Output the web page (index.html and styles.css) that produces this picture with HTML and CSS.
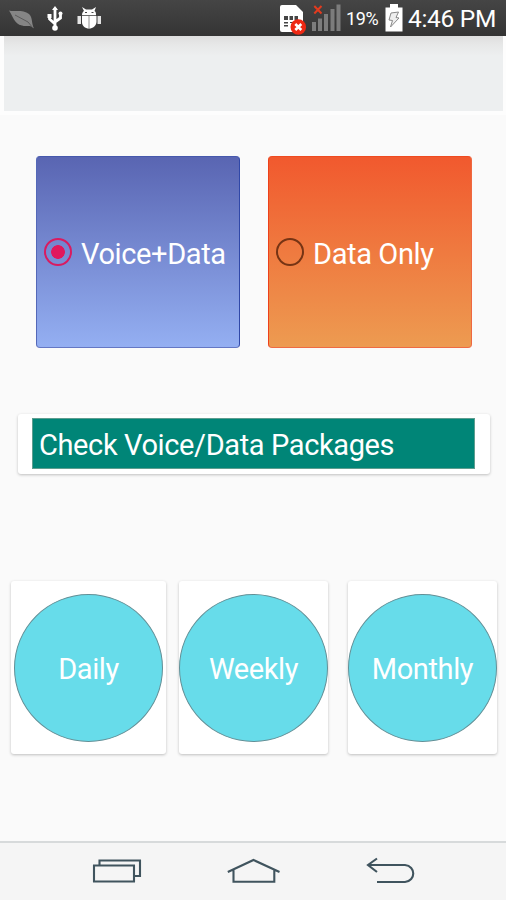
FILE: index.html
```html
<!DOCTYPE html>
<html lang="en">

<head>
    <meta charset="UTF-8">
    <meta name="viewport" content="width=device-width, initial-scale=1.0">
    <title>Packages</title>
    <link rel="stylesheet" href="styles.css">
</head>

<body>
    <div class="screen">
        <header class="status-bar">
            <svg class="status-left" width="110" height="36" viewBox="0 0 110 36">
                <path d="M9 10.500C14 12 23 9 29 14C33 18 31 22 34 28.500C30 24 27 27 22 25.500C14 24 13 16 9 10.500Z" fill="#858585"/>
                <path d="M15 15L28 22L33 28" fill="none" stroke="#5b5b5b" stroke-width="1"/>
                <g fill="none" stroke="#fff" stroke-width="2.8">
                    <path d="M55 8V29M49.500 15V19L55 24M60.500 13V18L55 22"/>
                </g>
                <path d="M52 10L55 6L58 10Z" fill="#fff"/>
                <circle cx="55" cy="28" r="2.800" fill="#fff"/>
                <rect x="47.500" y="14" width="4" height="4" fill="#fff"/>
                <circle cx="60.500" cy="13.500" r="2" fill="#fff"/>
                <path d="M82 15C82 13 83 11.500 84 11L82 7L86 9.500H92L96 7L94.500 11C96 12 96 13 96 15Z" fill="#fff"/>
                <path d="M82 16H96.500V22C96 26 93 28.500 89 28.500S82 26 82 22Z" fill="#fff"/>
                <path d="M77.500 16H81V24H77.500ZM97.500 16H101V24H97.500Z" fill="#e4e4e4"/>
                <path d="M89 16V28M82 15.500H96" stroke="#777" stroke-width="0.800"/>
                <path d="M85 12.500H87M91.500 12.500H93.500" stroke="#444" stroke-width="1.200"/>
            </svg>
            <div class="status-right">
                <svg width="65" height="36" viewBox="279 0 65 36">
                    <path d="M282 5H296L303 12V30Q303 32 301 32H282Q280 32 280 30V7Q280 5 282 5Z" fill="#fff"/>
                    <path d="M284 16H288V20H284ZM289.500 16H293V20H289.500ZM294.500 16H298V20H294.500ZM284 22H288V23.500H284ZM284 25H288V26.500H284ZM290 22H293V23H290Z" fill="#444"/>
                    <circle cx="298.300" cy="27" r="7.800" fill="#ee2813"/>
                    <path d="M295.300 24L301.300 30M301.300 24L295.300 30" stroke="#fff" stroke-width="2.600"/>
                    <path d="M312 22H316V31H312ZM318 18.500H322V31H318ZM324 14H328V31H324ZM330.500 9H334.500V31H330.500ZM336.500 4.500H340.500V31H336.500Z" fill="#7c7c7c"/>
                    <path d="M314.300 6L321.500 13.500M321.500 6L314.300 13.500" stroke="#e33b1f" stroke-width="2"/>
                </svg>
                <span class="battery-level">19%</span>
                <svg class="battery" width="18" height="28" viewBox="0 0 18 28">
                    <path d="M5 0H13V3.500H17.500V27.500H0.500V3.500H5Z" fill="#fff"/>
                    <path d="M6 9L13.500 8L11 13.500L14 14L5.500 23L7.500 16.500L4 16Z" fill="#eee" stroke="#888" stroke-width="1"/>
                </svg>
                <span class="clock">4:46 PM</span>
            </div>
        </header>

        <div class="banner"></div>

        <main class="content">
            <div class="plan-options">
                <div class="plan voice-data">
                    <span class="radio checked"></span>
                    <span>Voice+Data</span>
                </div>
                <div class="plan data-only">
                    <span class="radio"></span>
                    <span>Data Only</span>
                </div>
            </div>

            <div class="card check-card">
                <div class="check-btn">Check Voice/Data Packages</div>
            </div>

            <div class="periods">
                <div class="card period daily">
                    <div class="circle">Daily</div>
                </div>
                <div class="card period weekly">
                    <div class="circle">Weekly</div>
                </div>
                <div class="card period monthly">
                    <div class="circle">Monthly</div>
                </div>
            </div>
        </main>

        <nav class="nav-bar">
            <svg width="50" height="28" viewBox="92 857 50 28">
                <path d="M99.500 865.500V860.500H140V876H134.500"/>
                <path d="M94 865.500H134V881.500H94Z"/>
            </svg>
            <svg width="54" height="28" viewBox="227 857 54 28">
                <path d="M227.800 872L253.500 860L279.500 872M233.500 870V881.700H274.300V870"/>
            </svg>
            <svg width="50" height="28" viewBox="366 857 50 28">
                <path d="M377 858.500L368 865L377 872M368 865H405C416 866 416 881 405 882H377"/>
            </svg>
        </nav>
    </div>
</body>

</html>
```

FILE: styles.css
```css
* {
    margin: 0;
    padding: 0;
    box-sizing: border-box;
}

body {
    font-family: Roboto, 'Liberation Sans', sans-serif;
    background: #fafafa;
    color: #fff;
    overflow: hidden;
}

svg {
    display: block;
    flex: none;
}

.screen {
    width: 506px;
    height: 900px;
    display: flex;
    flex-direction: column;
}

/* Status bar */
.status-bar {
    height: 36px;
    background: linear-gradient(#454545, #343434);
    display: flex;
    justify-content: space-between;
    flex: none;
}

.status-right {
    display: flex;
    align-items: center;
    padding-right: 10px;
}

.battery-level {
    width: 41px;
    padding-left: 2px;
    font-size: 18px;
    letter-spacing: -0.4px;
}

.battery {
    margin-right: 5px;
}

.clock {
    width: 88px;
    font-size: 24.5px;
    letter-spacing: -0.3px;
    line-height: 36px;
    white-space: nowrap;
    padding-top: 2px;
}

.banner {
    height: 79px;
    flex: none;
    border: solid #fdfdfd;
    border-width: 0 3px 4px 4px;
    background: linear-gradient(#dedede, #e7e8e8 9px, #edeff0 20px);
}

.content {
    flex: 1;
    padding-top: 41px;
}

.plan-options {
    display: flex;
    gap: 28px;
    padding-left: 36px;
}

.plan,
.check-btn,
.circle {
    font-size: 29px;
    letter-spacing: -0.38px;
    white-space: nowrap;
}

.plan {
    width: 204px;
    height: 192px;
    display: flex;
    align-items: center;
    padding-left: 7px;
    border: 1px solid;
    border-radius: 4px;
}

.plan span:last-child {
    padding-top: 3px;
}

.voice-data {
    background: linear-gradient(#5965b2, #94aff2);
    border-color: #4658ac #3048a8 #6477c4 #5468b8;
}

.data-only {
    background: linear-gradient(#f1592e, #ed9b51);
    border-color: #ef4a20 #ee6841 #ef6a44 #ee401a;
}

.radio {
    width: 28px;
    height: 28px;
    flex: none;
    border: 2.5px solid #763414;
    border-radius: 50%;
    margin-right: 9px;
}

.radio.checked {
    border-color: #d91b60;
    background: radial-gradient(circle, #e0185d 6.5px, transparent 7.2px);
}

.card {
    background: #fff;
    border-radius: 3px;
    box-shadow: 0 1px 3px rgba(0, 0, 0, 0.24);
}

.check-card {
    width: 472px;
    height: 60px;
    margin: 66px 0 0 18px;
    padding: 4px 15px 5px 14px;
}

.check-btn {
    height: 51px;
    background: #008577;
    border: 1px solid #5e9d8f;
    padding-left: 6px;
    line-height: 52px;
}

.periods {
    display: flex;
    margin-top: 107px;
    padding-left: 11px;
}

.period {
    width: 149px;
    height: 173px;
    padding-top: 13px;
}

.daily {
    width: 155px;
    padding-left: 3px;
    margin-right: 13px;
}

.weekly {
    margin-right: 20px;
}

.circle {
    width: 149px;
    height: 148px;
    border: 1px solid #638f96;
    border-radius: 50%;
    background: #67dcea;
    text-align: center;
    line-height: 148px;
}

/* Navigation bar */
.nav-bar {
    height: 59px;
    flex: none;
    display: flex;
    gap: 85px;
    padding: 14px 0 0 92px;
    background: #f5f5f5;
    border-top: 2px solid #d7dadb;
}

.nav-bar path {
    fill: none;
    stroke: #40545e;
    stroke-width: 2.1;
}
```
